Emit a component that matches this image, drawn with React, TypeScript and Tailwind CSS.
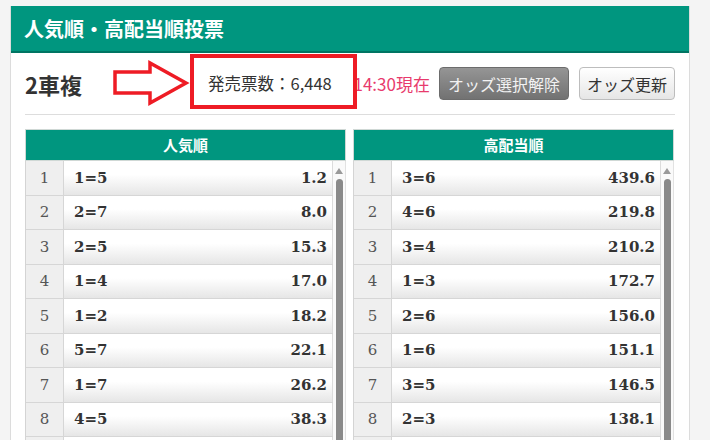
import React from "react";

type Row = { rank: number; combo: string; odds: string };

const popular: Row[] = [
  { rank: 1, combo: "1=5", odds: "1.2" },
  { rank: 2, combo: "2=7", odds: "8.0" },
  { rank: 3, combo: "2=5", odds: "15.3" },
  { rank: 4, combo: "1=4", odds: "17.0" },
  { rank: 5, combo: "1=2", odds: "18.2" },
  { rank: 6, combo: "5=7", odds: "22.1" },
  { rank: 7, combo: "1=7", odds: "26.2" },
  { rank: 8, combo: "4=5", odds: "38.3" },
];

const highPay: Row[] = [
  { rank: 1, combo: "3=6", odds: "439.6" },
  { rank: 2, combo: "4=6", odds: "219.8" },
  { rank: 3, combo: "3=4", odds: "210.2" },
  { rank: 4, combo: "1=3", odds: "172.7" },
  { rank: 5, combo: "2=6", odds: "156.0" },
  { rank: 6, combo: "1=6", odds: "151.1" },
  { rank: 7, combo: "3=5", odds: "146.5" },
  { rank: 8, combo: "2=3", odds: "138.1" },
];

const jp = { fontFamily: '"Noto Sans CJK JP", "Noto Sans", sans-serif' };
const serif = { fontFamily: '"DejaVu Serif", "Liberation Serif", serif' };

function OddsTable({ title, rows }: { title: string; rows: Row[] }) {
  return (
    <div className="w-[321px] flex flex-col">
      <div
        className="h-[32px] bg-[#00967f] border border-[#cfd8d5] flex items-center justify-center text-white font-bold text-[15px]"
        style={jp}
      >
        {title}
      </div>
      <div className="flex">
        <div className="flex-1 flex flex-col border-l border-[#d4d4d4]">
          {rows.map((r) => (
            <div key={r.rank} className="h-[34.5px] flex border-b border-[#d6d6d6] shrink-0">
              <div
                className="w-[38px] bg-[#efefef] border-r border-[#d6d6d6] flex items-center justify-center text-[#555] text-[15px]"
                style={serif}
              >
                {r.rank}
              </div>
              <div
                className="flex-1 bg-linear-to-b from-white from-40% to-[#e6e6e6] border-r border-[#dcdcdc] flex items-center justify-between pl-[10px] pr-[5px] font-bold text-[15px] text-[#333]"
                style={serif}
              >
                <span>{r.combo}</span>
                <span>{r.odds}</span>
              </div>
            </div>
          ))}
          <div className="h-[34.5px] flex shrink-0">
            <div className="w-[38px] bg-[#efefef] border-r border-[#d6d6d6]" />
            <div className="flex-1 bg-linear-to-b from-white from-40% to-[#e6e6e6] border-r border-[#dcdcdc]" />
          </div>
        </div>
        <div className="w-[13px] bg-[#fafafa] border-r border-[#e2e2e2] flex flex-col items-center pt-[7px]">
          <svg width="8" height="6" viewBox="0 0 8 6">
            <polygon points="4,0 8,6 0,6" fill="#9a9a9a" />
          </svg>
          <div className="mt-[5px] w-[7px] flex-1 rounded-t-full bg-[#8a8a8a]" />
        </div>
      </div>
    </div>
  );
}

export default function App() {
  return (
    <div className="w-[710px] h-[440px] overflow-hidden bg-[#f4f4f4] pt-[6px] pl-[10px]">
      <div className="w-[680px] h-[500px] bg-white border-x border-[#dcdcdc]">
        <div
          className="h-[47px] bg-[#00967f] border-b-2 border-[#007563] flex items-center pl-[13px] text-white font-bold text-[20px]"
          style={jp}
        >
          人気順・高配当順投票
        </div>
        <div className="relative h-[61px] flex items-center pl-[14px] pr-[14px]" style={jp}>
          <div className="text-[22px] font-bold text-[#333] leading-none">2車複</div>
          <div className="ml-[126px] text-[16.5px] text-[#333]">発売票数：6,448</div>
          <div className="ml-auto flex items-center">
            <div className="text-[17px] text-[#e83a6c]">14:30現在</div>
            <button
              className="ml-[9px] h-[33px] px-[8px] rounded-[4px] border border-[#6c6c6c] bg-linear-to-b from-[#959595] to-[#727272] text-[#f2f2f2] text-[16px]"
              style={jp}
            >
              オッズ選択解除
            </button>
            <button
              className="ml-[10px] h-[33px] px-[7px] rounded-[4px] border border-[#bdbdbd] bg-linear-to-b from-white to-[#e6e6e6] text-[#333] text-[16px]"
              style={jp}
            >
              オッズ更新
            </button>
          </div>
          {/* annotation overlays */}
          <div className="absolute left-[179px] top-[1px] w-[167px] h-[55px] border-[4px] border-[#ee1c25]" />
          <svg
            className="absolute left-[102px] top-[7px]"
            width="78"
            height="46"
            viewBox="0 0 78 46"
          >
            <polygon
              points="2,12 37,12 37,3 73,23 37,43 37,33 2,33"
              fill="white"
              stroke="#ee1c25"
              strokeWidth="3.5"
              strokeLinejoin="miter"
            />
          </svg>
        </div>
        <div className="mx-[14px] border-t border-[#dddddd]" />
        <div className="flex gap-[7px] px-[14px] pt-[14px]">
          <OddsTable title="人気順" rows={popular} />
          <OddsTable title="高配当順" rows={highPay} />
        </div>
      </div>
    </div>
  );
}
